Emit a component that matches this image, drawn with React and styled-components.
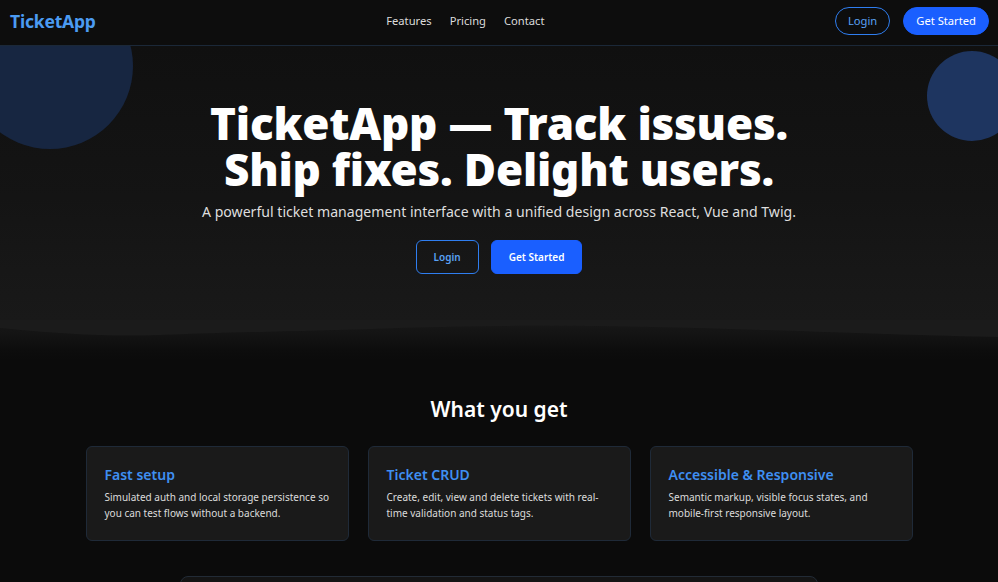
import React from 'react';
import styled, { createGlobalStyle } from 'styled-components';

const GlobalStyle = createGlobalStyle`
  html, body {
    margin: 0;
    padding: 0;
    background: #0b0b0b;
    color: #e6e6e6;
    font-family: "Noto Sans", "Open Sans", sans-serif;
  }
  * { box-sizing: border-box; }
`;

const Page = styled.div`
  min-height: 582px;
  overflow: hidden;
  background: #0b0b0b;
`;

const Header = styled.header`
  display: flex;
  align-items: center;
  justify-content: space-between;
  height: 46px;
  padding: 0 9px 4px 10px;
  background: #0d0d0d;
  border-bottom: 1px solid #1b2838;
  position: relative;
  z-index: 2;
`;

const Logo = styled.div`
  font-size: 17.5px;
  font-weight: 700;
  color: #4b9bf2;
  letter-spacing: -0.2px;
`;

const Nav = styled.nav`
  display: flex;
  gap: 18px;
`;

const NavLink = styled.a`
  font-size: 11.2px;
  color: #dcdcdc;
  text-decoration: none;
`;

const Actions = styled.div`
  display: flex;
  gap: 13px;
`;

const PillButton = styled.button`
  height: 28px;
  padding: 0 12px;
  border-radius: 14px;
  font-family: inherit;
  font-size: 11.2px;
  cursor: pointer;
  border: 1px solid ${p => (p.$primary ? '#1a5fff' : '#2f7ef0')};
  background: ${p => (p.$primary ? '#1a5fff' : 'transparent')};
  color: ${p => (p.$primary ? '#ffffff' : '#5aa2f5')};
`;

const Hero = styled.section`
  position: relative;
  padding: 54px 20px 0;
  text-align: center;
  background: linear-gradient(180deg, #101010 0%, #141414 55%, #191919 100%);
  height: 274px;
`;

const Wave = styled.div`
  height: 40px;
  background: linear-gradient(180deg, #191919 0%, #121212 45%, #0d0d0d 75%, #0b0b0b 100%);

  svg {
    display: block;
    width: 100%;
    height: 18px;
  }
`;

const Circle = styled.div`
  position: absolute;
  border-radius: 50%;
  width: ${p => p.$size}px;
  height: ${p => p.$size}px;
  background: ${p => p.$color};
`;

const LeftCircle = styled(Circle)`
  left: -33px;
  top: -63px;
`;

const RightCircle = styled(Circle)`
  right: -19px;
  top: 5px;
`;

const Title = styled.h1`
  position: relative;
  margin: 0;
  font-size: 44px;
  line-height: 46px;
  font-weight: 900;
  color: #ffffff;
  letter-spacing: -0.2px;
`;

const Subtitle = styled.p`
  position: relative;
  margin: 10px 0 0;
  font-size: 14.1px;
  color: #dedede;
`;

const HeroActions = styled.div`
  display: flex;
  justify-content: center;
  gap: 12px;
  margin-top: 19px;
`;

const BoxButton = styled.button`
  height: 34px;
  padding: 0 17px;
  border-radius: 6px;
  font-family: inherit;
  font-size: 10px;
  font-weight: 600;
  cursor: pointer;
  border: 1px solid ${p => (p.$primary ? '#1a5fff' : '#2f7ef0')};
  background: ${p => (p.$primary ? '#1a5fff' : 'transparent')};
  color: ${p => (p.$primary ? '#ffffff' : '#5aa2f5')};
`;

const Features = styled.section`
  padding: 0 20px;
  text-align: center;
`;

const SectionTitle = styled.h2`
  margin: 35px 0 23px;
  font-size: 21px;
  line-height: 28px;
  font-weight: 600;
  color: #ffffff;
`;

const Grid = styled.div`
  display: grid;
  grid-template-columns: repeat(3, 263px);
  gap: 19px;
  justify-content: center;
`;

const Card = styled.div`
  height: 95px;
  padding: 18px 15px 18px 18px;
  background: #1a1a1a;
  border: 1px solid #1f2a38;
  border-radius: 6px;
  text-align: left;
`;

const CardTitle = styled.h3`
  margin: 0 0 5px;
  font-size: 14px;
  font-weight: 600;
  color: #3f8ff2;
`;

const CardText = styled.p`
  margin: 0;
  font-size: 10px;
  line-height: 16px;
  color: #dcdcdc;
`;

const NextPanel = styled.div`
  width: 638px;
  height: 60px;
  margin: 35px auto 0;
  background: #141414;
  border: 1px solid #222b36;
  border-radius: 8px;
`;

const features = [
  { title: 'Fast setup', text: 'Simulated auth and local storage persistence so you can test flows without a backend.' },
  { title: 'Ticket CRUD', text: 'Create, edit, view and delete tickets with real-time validation and status tags.' },
  { title: 'Accessible & Responsive', text: 'Semantic markup, visible focus states, and mobile-first responsive layout.' },
];

export default function App() {
  return (
    <Page>
      <GlobalStyle />
      <Header>
        <Logo>TicketApp</Logo>
        <Nav>
          <NavLink href="#">Features</NavLink>
          <NavLink href="#">Pricing</NavLink>
          <NavLink href="#">Contact</NavLink>
        </Nav>
        <Actions>
          <PillButton>Login</PillButton>
          <PillButton $primary>Get Started</PillButton>
        </Actions>
      </Header>
      <Hero>
        <LeftCircle $size={166} $color="#172641" />
        <RightCircle $size={90} $color="#1e3560" />
        <Title>
          TicketApp — Track issues.
          <br />
          Ship fixes. Delight users.
        </Title>
        <Subtitle>A powerful ticket management interface with a unified design across React, Vue and Twig.</Subtitle>
        <HeroActions>
          <BoxButton>Login</BoxButton>
          <BoxButton $primary>Get Started</BoxButton>
        </HeroActions>
      </Hero>
      <Wave>
        <svg viewBox="0 0 998 18" preserveAspectRatio="none" aria-hidden="true">
          <path d="M0 8 C60 14 110 17 160 15 C260 11 300 12 400 8 C520 4 640 6 760 10 C860 13 930 16 998 17 L998 0 L0 0 Z" fill="#1b1b1b" />
        </svg>
      </Wave>
      <Features>
        <SectionTitle>What you get</SectionTitle>
        <Grid>
          {features.map(f => (
            <Card key={f.title}>
              <CardTitle>{f.title}</CardTitle>
              <CardText>{f.text}</CardText>
            </Card>
          ))}
        </Grid>
        <NextPanel />
      </Features>
    </Page>
  );
}
